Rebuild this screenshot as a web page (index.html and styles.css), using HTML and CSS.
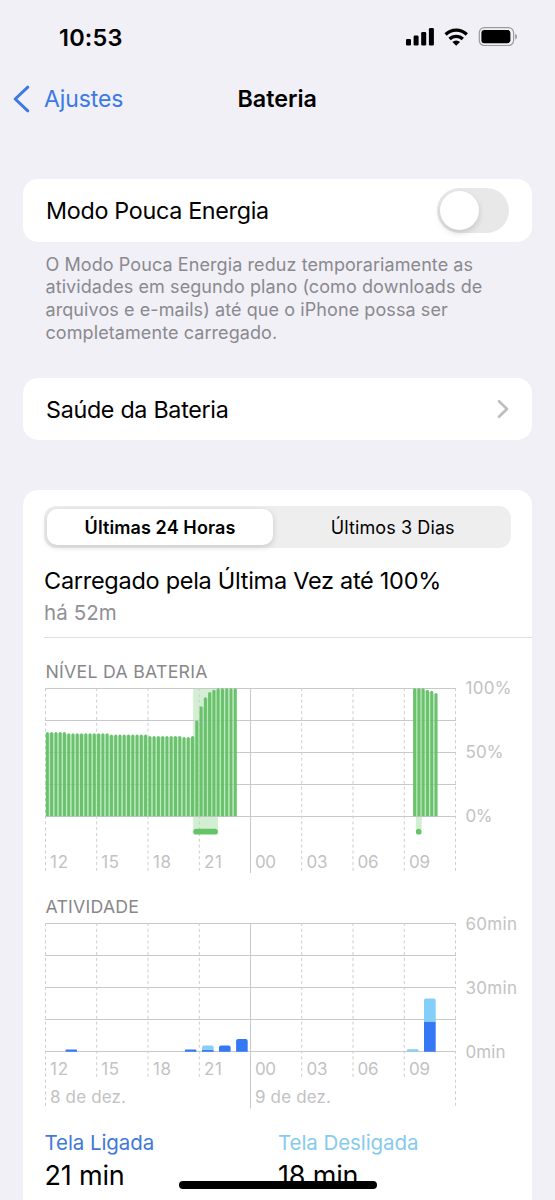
FILE: index.html
```html
<!DOCTYPE html>
<html lang="pt-BR">
<head>
<meta charset="utf-8">
<title>Bateria</title>
<link rel="stylesheet" href="styles.css">
</head>
<body>
<div class="screen">
  <header class="status">
    <span class="time">10:53</span>
    <svg class="status-icons" width="114" height="22" viewBox="405 26 114 22" aria-hidden="true">
      <rect x="406" y="39" width="5" height="6.6" rx="1.3"/>
      <rect x="413.6" y="35.6" width="5" height="10" rx="1.3"/>
      <rect x="421.2" y="32" width="5" height="13.6" rx="1.3"/>
      <rect x="428.9" y="28" width="5" height="17.6" rx="1.3"/>
      <path class="arc" d="M445.6 34.5a15.2 15.2 0 0 1 21.2 0M449.6 39a9.4 9.4 0 0 1 13.2 0"/>
      <path d="M452.4 42.1a5.5 5.5 0 0 1 7.6 0L456.2 45.8Z"/>
      <rect class="shell" x="479.3" y="27.7" width="34.3" height="17.8" rx="5"/>
      <rect x="481.4" y="29.9" width="29" height="13.4" rx="3"/>
      <path class="nub" d="M515.3 33.8c2.2 1 2.2 4.8 0 5.8Z"/>
    </svg>
  </header>
  <nav class="nav">
    <svg class="back" width="18" height="28" viewBox="0 0 18 28" aria-hidden="true"><path d="M14.8 2.2 2.2 14 14.8 25.8"/></svg>
    <span class="back-label">Ajustes</span>
    <h1 class="title">Bateria</h1>
  </nav>
  <main class="content">
    <section class="card row">
      <span class="label mode">Modo Pouca Energia</span>
      <span class="switch"><span class="knob"></span></span>
    </section>
    <p class="note">O Modo Pouca Energia reduz temporariamente as<br>atividades em segundo plano (como downloads de<br>arquivos e e-mails) até que o iPhone possa ser<br>completamente carregado.</p>
    <section class="card row health">
      <span class="label">Saúde da Bateria</span>
      <svg class="chevron" width="12" height="20" viewBox="0 0 12 20" aria-hidden="true"><path d="M2 2.3 10 10 2 17.7"/></svg>
    </section>
    <section class="card usage">
      <div class="segments">
        <span class="segment active">Últimas 24 Horas</span>
        <span class="segment">Últimos 3 Dias</span>
      </div>
      <div class="charged">
        <p class="charged-title">Carregado pela Última Vez até 100%</p>
        <p class="charged-time">há 52m</p>
      </div>
      <svg class="chart" width="509" height="242" viewBox="23 638 509 242">
        <text class="head" x="45.5" y="678" textLength="162">NÍVEL DA BATERIA</text>
        <rect class="charging" x="193.2" y="688.3" width="24.8" height="141"/>
        <rect class="charging" x="415.8" y="688.3" width="6" height="141"/>
        <path class="grid" d="M45 688.5H456M45 720.5H456M45 752.5H456M45 784.5H456M45 816.5H456M250.5 688V873"/>
        <path class="dash" d="M45.5 688V871M96.7 688V871M148 688V871M199.3 688V871M301.7 688V871M353 688V871M404.3 688V871M455.5 688V871"/>
        <g id="level-bars"></g>
        <path class="charge-mark" d="M196.1 831.7H215.1M418.7 831.7h.01"/>
        <g class="axis">
          <text x="50" y="868" textLength="18">12</text><text x="101.2" y="868" textLength="18">15</text><text x="153" y="868" textLength="18">18</text><text x="204" y="868" textLength="18">21</text>
          <text x="255" y="868" textLength="21">00</text><text x="306.5" y="868" textLength="21">03</text><text x="357.5" y="868" textLength="21">06</text><text x="409" y="868" textLength="21">09</text>
          <text x="465.5" y="694.3" textLength="46">100%</text><text x="465.5" y="758.3" textLength="38">50%</text><text x="465.5" y="822.3" textLength="27">0%</text>
        </g>
      </svg>
      <svg class="chart" width="509" height="240" viewBox="23 880 509 240">
        <text class="head" x="45.5" y="913.3" textLength="93.5">ATIVIDADE</text>
        <path class="grid" d="M45 923.5H456M45 955.5H456M45 987.5H456M45 1019.5H456M45 1051.5H456M250.5 923V1108.5"/>
        <path class="dash" d="M45.5 923V1107M96.7 923V1078M148 923V1078M199.3 923V1078M301.7 923V1078M353 923V1078M404.3 923V1078M455.5 923V1107"/>
        <path class="on" d="M65.5 1051.8v-1.2q0-1 1-1h9.5q1 0 1 1v1.2ZM184.9 1051.8v-1.2q0-1 1-1h9.5q1 0 1 1v1.2ZM202 1051.8v-2h11.6v2ZM219 1051.8v-4.3q0-2 2-2h7.6q2 0 2 2v4.3ZM236.1 1051.8v-10.8q0-2 2-2h7.6q2 0 2 2v10.8ZM424 1051.8v-30.3h11.7v30.3Z"/>
        <path class="off" d="M202 1049.8v-2.3q0-2 2-2h7.6q2 0 2 2v2.3ZM407 1051.5v-1.3q0-1 1-1h9.5q1 0 1 1v1.3ZM424 1021.5v-21.2q0-1.8 1.8-1.8h8.1q1.8 0 1.8 1.8v21.2Z"/>
        <g class="axis">
          <text x="50" y="1075" textLength="18">12</text><text x="101.2" y="1075" textLength="18">15</text><text x="153" y="1075" textLength="18">18</text><text x="204" y="1075" textLength="18">21</text>
          <text x="255" y="1075" textLength="21">00</text><text x="306.5" y="1075" textLength="21">03</text><text x="357.5" y="1075" textLength="21">06</text><text x="409" y="1075" textLength="21">09</text>
          <text x="50" y="1103.3" textLength="76">8 de dez.</text><text x="255" y="1103.3" textLength="76">9 de dez.</text>
          <text x="465.5" y="929.5" textLength="51.5">60min</text><text x="465.5" y="993.5" textLength="51.5">30min</text><text x="465.5" y="1057.5" textLength="40">0min</text>
        </g>
      </svg>
      <div class="totals">
        <div class="total screen-on"><span class="total-label">Tela Ligada</span><span class="total-value">21 min</span></div>
        <div class="total screen-off"><span class="total-label">Tela Desligada</span><span class="total-value">18 min</span></div>
      </div>
    </section>
  </main>
  <div class="home-indicator"></div>
</div>
<script src="chart.js"></script>
</body>
</html>
```
FILE: chart.js
```js
// Battery level bars: [first quarter-hour slot, top of each bar]
const runs = [
  [0, [...Array(5).fill(732), ...Array(10).fill(733.3), ...Array(9).fill(734.6), ...Array(8).fill(735.9),
    737, 737, 735.9, 720.5, 706.2, 697.3, 692, 689.8, ...Array(5).fill(688.2)]],
  [86, [688.2, 688.2, 688.2, 689.7, 690.7, 693]]
];
const pitch = 4.2708;
const group = document.getElementById('level-bars');

function addPath(d, className) {
  const path = document.createElementNS('http://www.w3.org/2000/svg', 'path');
  path.setAttribute('d', d);
  path.setAttribute('class', className);
  group.appendChild(path);
}

for (const [start, tops] of runs) {
  tops.forEach((top, i) => {
    const x = 45.8 + (start + i) * pitch;
    if (i < tops.length - 1) {
      const gapTop = Math.max(top, tops[i + 1]) + 1;
      addPath(`M${(x + 3.1).toFixed(2)} ${gapTop}h1.17V816.3h-1.17Z`, 'gap');
    }
    addPath(`M${x.toFixed(2)} 816.3V${top + 1.5}q0-1.5 1.55-1.5t1.55 1.5V816.3Z`, 'bar');
  });
}
```
FILE: styles.css
```css
* { box-sizing: border-box; }
body { margin: 0; background: #f1f0f6; color: #000; font-family: Inter, "Liberation Sans", sans-serif; }
h1, p { margin: 0; }
.screen { position: relative; height: 1200px; overflow: hidden; }
.status { height: 74px; padding: 0 36px 0 59px; display: flex; align-items: center; justify-content: space-between; }
.time { font-size: 23.5px; font-weight: 600; letter-spacing: .2px; white-space: nowrap; }
.status-icons { display: block; }
.arc { fill: none; stroke: #000; stroke-width: 3.3; }
.shell { fill: none; stroke: #9b9a9f; stroke-width: 1.2; }
.nub { fill: #8e8d92; }
.nav { display: grid; grid-template-columns: 31px 193.5px 1fr; align-items: center; height: 49px; padding-left: 13px; }
.back { fill: none; stroke: #3b79e4; stroke-width: 3; stroke-linecap: round; stroke-linejoin: round; }
.back-label { color: #3b79e4; font-size: 23px; letter-spacing: -.1px; }
.title { font-size: 23.3px; font-weight: 600; letter-spacing: 0; }
.content { padding: 56px 23px 0; }
.card { background: #fff; border-radius: 15px; }
.row { height: 62.5px; padding: 0 23px; display: flex; align-items: center; justify-content: space-between; }
.label { padding-top: 1px; font-size: 23.3px; letter-spacing: -.3px; white-space: nowrap; }
.switch { width: 72px; height: 45px; padding: 3px; border-radius: 23px; background: #e8e8e9; }
.knob { display: block; width: 39px; height: 39px; border-radius: 50%; background: #fff; box-shadow: 0 3px 6px rgba(0,0,0,.15); }
.note { height: 136px; padding: 12px 0 0 22.5px; color: #8a898f; font-size: 18px; line-height: 22.75px; letter-spacing: .085px; white-space: nowrap; }
.chevron { fill: none; stroke: #bebec1; stroke-width: 2.7; stroke-linecap: round; stroke-linejoin: round; }
.usage { height: 730px; margin-top: 49.5px; padding-top: 16px; }
.segments { display: grid; grid-template-columns: 1fr 1fr; height: 42px; margin: 0 21px; padding: 3px; border-radius: 12px; background: #eeeeef; }
.segment { display: flex; align-items: center; justify-content: center; padding-top: 1px; font-size: 18px; letter-spacing: .1px; white-space: nowrap; }
.active { width: 226px; border-radius: 10px; background: #fff; font-weight: 600; box-shadow: 0 2px 6px rgba(0,0,0,.16); }
.charged { height: 90px; margin-left: 21px; padding-top: 17px; border-bottom: 1px solid #dededf; white-space: nowrap; }
.charged-title { font-size: 23.5px; line-height: 32px; letter-spacing: -.28px; }
.charged-time { color: #919095; font-size: 20.5px; line-height: 31px; letter-spacing: .1px; }
.chart { display: block; }
.chart text { font-family: Inter, "Liberation Sans", sans-serif; }
.head { fill: #88878c; font-size: 17.7px; }
.axis { fill: #c2c2c4; font-size: 17px; }
.grid { fill: none; stroke: #c9c9cb; }
.dash { fill: none; stroke: #cdcdd0; stroke-dasharray: 3 2.8; }
.charging { fill: #d2efd4; }
.bar { fill: #65c068; fill-opacity: .96; }
.gap { fill: #b4e8b3; fill-opacity: .85; }
.charge-mark { fill: none; stroke: #65c466; stroke-width: 5.8; stroke-linecap: round; }
.on { fill: #3478f6; }
.off { fill: #84cefa; }
.totals { display: grid; grid-template-columns: 233.5px 1fr; padding: 8px 0 0 21.5px; white-space: nowrap; }
.total { display: flex; flex-direction: column; }
.total-label { font-size: 20.5px; line-height: 29px; letter-spacing: -.08px; }
.screen-on .total-label { color: #3f79d8; }
.screen-off .total-label { color: #86cbed; }
.total-value { font-size: 27px; line-height: 38px; letter-spacing: -.2px; }
.home-indicator { position: absolute; left: 179px; top: 1181px; width: 198px; height: 7.5px; border-radius: 4px; background: #000; }
```
